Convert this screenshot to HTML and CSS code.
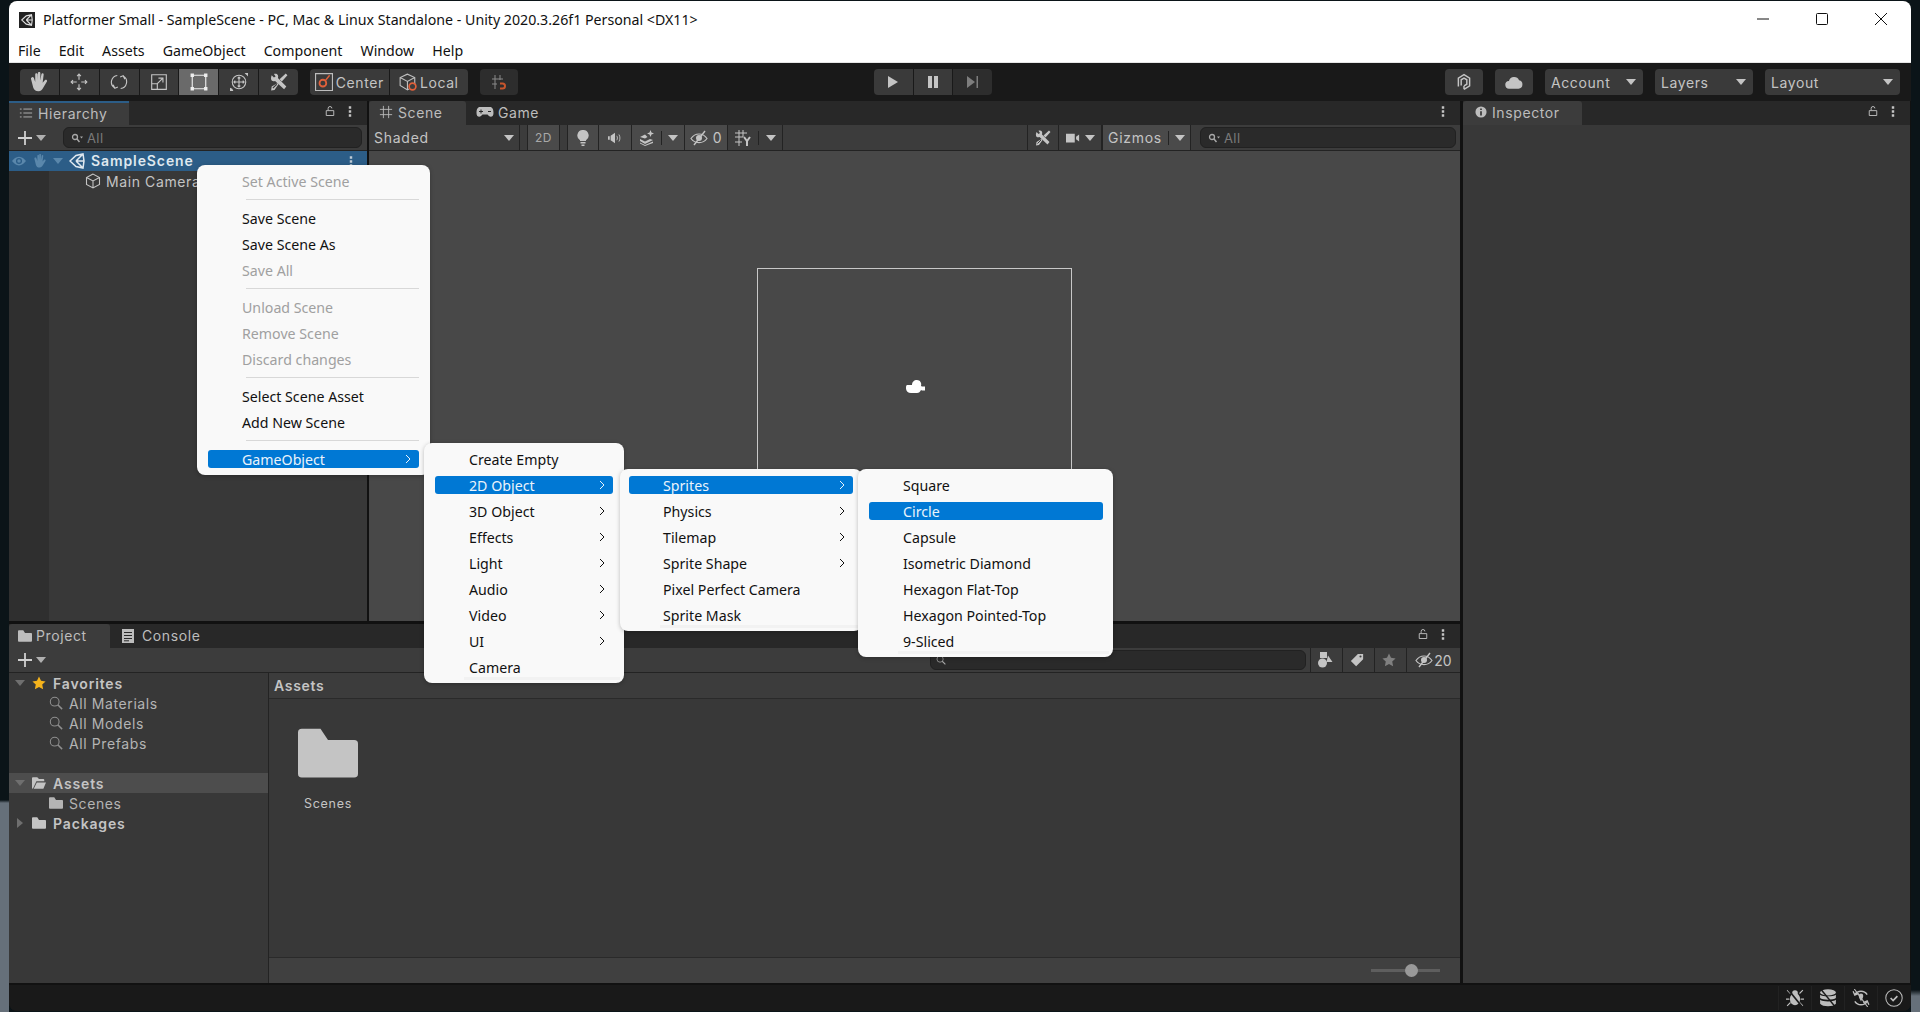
FILE: index.html
```html
<!DOCTYPE html>
<html>

<head>
    <title>Platformer Small - SampleScene</title>
    <meta charset="utf-8">
    <link rel="stylesheet" href="styles.css">
</head>

<body>
    <svg class="sprites" xmlns="http://www.w3.org/2000/svg">
        <symbol id="i-hand" viewBox="2 1 12.500 14"><path fill="currentColor" d="M3.4 4.600c.9-.3 1.200.3 1.400 1L5.600 8V2.800c0-1.300 1.600-1.300 1.700 0V7l.2-5.200c.1-1.300 1.700-1.200 1.700 0L9.200 7l.7-4.300c.3-1.200 1.800-.9 1.600.3L10.800 8.500l1.500-1.700c.9-.9 2.100.1 1.400 1.100l-2.600 4.300c-.7 1.200-1.500 2.300-3.200 2.300-2.100 0-3.200-1-3.700-2.600L2.700 6c-.2-.7.1-1.200.7-1.400z" /></symbol>
        <symbol id="i-move" viewBox="0 0 16 16"><path fill="none" stroke="currentColor" d="M8 1v5M8 10v5M1 8h5M10 8h5M6.300 2.700 8 1l1.700 1.700M6.300 13.300 8 15l1.700-1.700M2.700 6.300 1 8l1.700 1.700M13.300 6.300 15 8l-1.700 1.700" /></symbol>
        <symbol id="i-rotate" viewBox="0 0 16 16"><path fill="none" stroke="currentColor" d="M6.500 2.200A6 6 0 0 0 4 13.200M9.500 13.800A6 6 0 0 0 12 2.800M2.800 10.500 4.300 13.500 7 12.500M13.200 5.500 11.700 2.500 9 3.500" /></symbol>
        <symbol id="i-scale" viewBox="0 0 16 16"><path fill="none" stroke="currentColor" d="M1.500 1.500h13v13h-13zM1.500 9.500h5v5M6.500 9.500 11 5M7.500 4.500H11.500V8.500" /></symbol>
        <symbol id="i-rect" viewBox="0 0 16 16"><path fill="none" stroke="currentColor" d="M3 2h10M3 14h10M2 3v10M14 3v10" /><path fill="currentColor" d="M.5.500h3v3h-3zM12.500.500h3v3h-3zM.5 12.500h3v3h-3zM12.500 12.500h3v3h-3z" /></symbol>
        <symbol id="i-transform" viewBox="0 0 16 16"><circle cx="8" cy="8" r="6" fill="none" stroke="currentColor" /><path fill="none" stroke="currentColor" d="M8 3.500v9M3.500 8h9M6.800 4.700 8 3.500l1.200 1.200M6.800 11.300 8 12.500l1.200-1.200M4.700 6.800 3.500 8l1.200 1.200M11.300 6.800 12.500 8l-1.200 1.200" /><path fill="currentColor" d="M13 0h3v3l-1-1-1-1zM0 16v-3l2 1 1 2z" /></symbol>
        <symbol id="i-tools" viewBox="0 0 16 16"><path fill="currentColor" d="M1.500 2 3.500 4 5 3 3.500.8C6 0 8 1.500 7 4.500L14.500 12 12.500 14.500 4.500 7C1.500 8 0 6 1.500 2z" /><path fill="currentColor" d="M14 .5 15.500 2 10.500 7.500 8.500 5.500zM6.500 9 7.500 10 4 15 1 15.500 1.500 12z" /><path stroke="#3a3a3a" d="M2.500 13.500 6 10" /></symbol>
        <symbol id="i-center" viewBox="0 0 16 16"><path fill="none" stroke="#bdbdbd" d="M.5.500h15v15H.5z" /><circle cx="7" cy="9" r="3" fill="none" stroke="#e0603a" stroke-width="1.600" /><path stroke="#e0603a" stroke-width="1.300" d="M9 7l4-5" /></symbol>
        <symbol id="i-local" viewBox="0 0 16 16"><path fill="none" stroke="#bdbdbd" d="M7.500 1 1 4v7l6.500 4 6.500-4V4zM1 4l6.500 3.500L14 4M7.500 7.500V15" /><circle cx="12" cy="12" r="3" fill="#3c3c3c" stroke="#e0603a" stroke-width="1.500" /></symbol>
        <symbol id="i-snap" viewBox="0 0 16 16"><path fill="none" stroke="#8a8a8a" d="M4 1v14M9 1v5M1 5h11M1 10h5" /><path fill="none" stroke="#c8552c" stroke-width="2" d="M9 9.500h2.500a2.500 2.500 0 0 1 0 5H9" /></symbol>
        <symbol id="i-collab" viewBox="0 0 16 16"><path fill="none" stroke="currentColor" stroke-width="1.300" d="M3 12V4.500L8 1.500l5 3v7l-5 3M5.500 11V6l2.500-1.500L10.500 6v4L8 11.500M8 11.500v3" /></symbol>
        <symbol id="i-cloud" viewBox="0 0 16 16"><path fill="currentColor" d="M4 14a3.500 3.500 0 0 1-.5-7A4.800 4.800 0 0 1 12.500 6.500 3.800 3.800 0 0 1 12 14z" /></symbol>
        <symbol id="i-list" viewBox="0 0 16 16"><path fill="none" stroke="currentColor" d="M5 3.500h10M5 8h10M5 12.500h10M1 3.500h2M1 8h2M1 12.500h2" /></symbol>
        <symbol id="i-lock" viewBox="0 0 16 16"><path fill="none" stroke="currentColor" stroke-width="1.200" d="M3 7.500h10v6.500H3zM5.500 7V4.500a2.500 2.500 0 0 1 5 0" /></symbol>
        <symbol id="i-kebab" viewBox="0 0 4 16"><path fill="currentColor" d="M.5 1.500h3v3h-3zM.5 6.500h3v3h-3zM.5 11.500h3v3h-3z" /></symbol>
        <symbol id="i-hash" viewBox="0 0 16 16"><path fill="none" stroke="currentColor" d="M5 1v14M11 1v14M1 5h14M1 11h14" /></symbol>
        <symbol id="i-pad" viewBox="0 0 18 12"><path fill="currentColor" d="M4 1h10c2.500 0 3.500 2.500 3.500 6 0 4-3 4.500-4.500 3l-1.500-1.500h-5L5 10c-1.500 1.500-4.500 1-4.500-3 0-3.500 1-6 3.500-6z" /><path stroke="#282828" d="M3 5.500h4M5 3.500v4M12 5.500h3" /></symbol>
        <symbol id="i-plus" viewBox="0 0 16 16"><path fill="none" stroke="currentColor" stroke-width="1.800" d="M8 1v14M1 8h14" /></symbol>
        <symbol id="i-caret" viewBox="0 0 10 6"><path fill="currentColor" d="M0 0h10L5 6z" /></symbol>
        <symbol id="i-caret-r" viewBox="0 0 6 10"><path fill="currentColor" d="M0 0v10l6-5z" /></symbol>
        <symbol id="i-find" viewBox="0 0 12 10"><circle cx="4" cy="4" r="2.500" fill="none" stroke="currentColor" stroke-width="1.300" /><path stroke="currentColor" stroke-width="1.500" d="M5.800 5.800 8.500 9" /><path fill="currentColor" d="M9 3.500h3L10.500 5.500z" /></symbol>
        <symbol id="i-eye" viewBox="0 0 16 12"><path fill="currentColor" d="M8 1c3.500 0 6 2.500 8 5-2 2.500-4.500 5-8 5S2 8.500 0 6c2-2.500 4.500-5 8-5zm0 1.500a3.500 3.500 0 1 0 0 7 3.500 3.500 0 0 0 0-7z" /><circle cx="8" cy="6" r="2" fill="currentColor" /></symbol>
        <symbol id="i-unity" viewBox="0 0 16 16"><path fill="none" stroke="currentColor" stroke-width="1.500" d="M1 8 7 2.500 14 1 15 8 14 15 7 13.500zM7 8H15M7 8 14 1M7 8 14 15" /></symbol>
        <symbol id="i-cube" viewBox="0 0 16 16"><path fill="none" stroke="currentColor" stroke-width="1.100" d="M8 1 1.500 4.500v7L8 15l6.500-3.500v-7zM1.500 4.500 8 8l6.500-3.500M8 8v7" /></symbol>
        <symbol id="i-bulb" viewBox="0 0 12 16"><path fill="currentColor" d="M6 0a5.500 5.500 0 0 1 3 10.200V11H3v-.800A5.500 5.500 0 0 1 6 0zM3.500 12h5v1.500h-5zM4.500 14.500h3V16h-3z" /></symbol>
        <symbol id="i-audio" viewBox="0 0 16 12"><path fill="currentColor" d="M0 4h2v4H0zM3 3.500 8 0v12L3 8.500z" /><path fill="none" stroke="currentColor" d="M10 3.500c1 1.500 1 3.500 0 5M12.500 2c1.500 2.500 1.500 5.500 0 8" /></symbol>
        <symbol id="i-fx" viewBox="0 0 16 16"><path fill="currentColor" d="m11.500 0 1 2.500 2.500 1-2.500 1-1 2.500-1-2.500-2.500-1 2.500-1z" /><path fill="currentColor" d="M6 4.500 8.500 7l-2.500 1.500L1 7zM1 9l5 2.500L11 9l3 1-8 4-5-3zM1 12.500l5 2.500 8-3.500v1.500l-8 3-5-2.500z" /></symbol>
        <symbol id="i-eyeoff" viewBox="0 0 18 14"><path fill="none" stroke="currentColor" stroke-width="1.200" d="M1 7.500c4-6 12-6 16 0-4 5.500-12 5.500-16 0z" /><circle cx="9" cy="7" r="3" fill="currentColor" /><path stroke="currentColor" stroke-width="1.400" d="M4 14 15 0" /></symbol>
        <symbol id="i-gridy" viewBox="0 0 16 16"><path fill="none" stroke="currentColor" d="M4 0v16M8 0v7M0 3h12M0 7h8M0 12h7" /><path fill="none" stroke="currentColor" stroke-width="2" d="M9 7l3 4 3-4M12 11v5" /></symbol>
        <symbol id="i-camera" viewBox="0 0 16 12"><path fill="currentColor" d="M0 1h10v10H0zM11.500 4.500 15 2v8l-3.500-2.500z" /></symbol>
        <symbol id="i-folder" viewBox="0 0 16 13"><path fill="currentColor" d="M1 0h5l2 3h7a1 1 0 0 1 1 1v8a1 1 0 0 1-1 1H1a1 1 0 0 1-1-1V1a1 1 0 0 1 1-1z" /></symbol>
        <symbol id="i-open" viewBox="0 0 16 13"><path fill="currentColor" d="M1 0h5l2 2h5a1 1 0 0 1 1 1v1.500H5L1 13h-.5L0 12V1a1 1 0 0 1 1-1zM5.500 6H16l-3 7H2z" /></symbol>
        <symbol id="i-star" viewBox="0 0 16 16"><path fill="currentColor" d="m8 .5 2.300 5 5.200.7-3.800 3.600 1 5.400L8 12.500l-4.700 2.700 1-5.400L.5 6.200l5.200-.7z" /></symbol>
        <symbol id="i-mag" viewBox="0 0 16 16"><circle cx="6.500" cy="6.500" r="5" fill="none" stroke="currentColor" stroke-width="1.200" /><path stroke="currentColor" stroke-width="1.700" d="m10 10 5 5" /></symbol>
        <symbol id="i-doc" viewBox="0 0 12 14"><path fill="currentColor" d="M0 0h12v14H0z" /><path stroke="#282828" d="M2 3.500h8M2 6.500h8M2 9.500h8M2 11.800h5" /></symbol>
        <symbol id="i-shapes" viewBox="0 0 16 16"><path fill="currentColor" d="M3 0h7v6H3zM11 3.500l4.500 6.500H9.500z" /><circle cx="5.500" cy="11" r="4.500" fill="currentColor" /></symbol>
        <symbol id="i-tag" viewBox="0 0 16 16"><path fill="currentColor" fill-rule="evenodd" d="M9 1h6v6l-8 8-6-6zm3 1.800a1.200 1.200 0 1 0 0 2.400 1.200 1.200 0 0 0 0-2.400z" /></symbol>
        <symbol id="i-bug" viewBox="0 0 16 16"><ellipse cx="8" cy="9" rx="4.500" ry="5.500" fill="currentColor" /><circle cx="8" cy="3.500" r="2.500" fill="currentColor" /><path stroke="currentColor" d="M1 1l3 3M15 1l-3 3M0 9h3M13 9h3M1 15l3-3M15 15l-3-3" /><path stroke="#191919" stroke-width="1.500" d="M1.500 0 14.500 16" /></symbol>
        <symbol id="i-db" viewBox="0 0 16 16"><ellipse cx="8" cy="3" rx="7" ry="2.800" fill="currentColor" /><path fill="currentColor" d="M1 5c2 2 12 2 14 0v3c-2 2-12 2-14 0zM1 9.500c2 2 12 2 14 0V13c-2 3-12 3-14 0z" /><path stroke="#191919" stroke-width="1.300" d="M1.500 0 14.500 16" /></symbol>
        <symbol id="i-sync" viewBox="0 0 16 16"><path fill="none" stroke="currentColor" stroke-width="1.200" d="M2.500 5A6.500 6.500 0 0 1 13.500 5M13.500 11A6.500 6.500 0 0 1 2.500 11M1 2l1.500 3.500L6 4M15 14l-1.500-3.500L10 12" /><path fill="currentColor" d="M8 4a2 2 0 0 1 2 2c0 2-1 3-2 5-1-2-2-3-2-5a2 2 0 0 1 2-2z" /><path stroke="currentColor" d="M2 0l12 16" /></symbol>
        <symbol id="i-check" viewBox="0 0 16 16"><circle cx="8" cy="8" r="7.300" fill="none" stroke="currentColor" stroke-width=".9" /><path fill="none" stroke="currentColor" stroke-width="1.500" d="m5 8 2.200 2.200L11 6.300" /></symbol>
        <symbol id="i-info" viewBox="0 0 14 14"><circle cx="7" cy="7" r="6.500" fill="currentColor" /><path stroke="#383838" stroke-width="2" d="M7 3v1.800M7 6v5" /></symbol>
        <symbol id="i-chev" viewBox="0 0 6 10"><path fill="none" stroke="currentColor" d="m1 1 4 4-4 4" /></symbol>
    </svg>

    <div id="window">
        <div id="titlebar">
            <span class="app-icon"><svg class="ic-12"><use href="#i-unity" /></svg></span>
            <span class="app-title">Platformer Small - SampleScene - PC, Mac &amp; Linux Standalone - Unity 2020.3.26f1 Personal &lt;DX11&gt;</span>
            <div class="win-btns">
                <svg class="win-btn" viewBox="0 0 12 12"><path stroke="#111" d="M0 6h12" /></svg>
                <svg class="win-btn" viewBox="0 0 12 12"><rect x=".5" y=".5" width="11" height="11" rx="1" fill="none" stroke="#111" /></svg>
                <svg class="win-btn" viewBox="0 0 12 12"><path stroke="#111" d="m0 0 12 12M12 0 0 12" /></svg>
            </div>
        </div>
        <div id="menubar">
            <span>File</span><span>Edit</span><span>Assets</span><span>GameObject</span><span>Component</span><span>Window</span><span>Help</span>
        </div>

        <div id="toolbar">
            <div class="tb-group tools">
                <div class="tb-btn"><svg class="ic-20"><use href="#i-hand" /></svg></div>
                <div class="tb-btn"><svg class="ic-18"><use href="#i-move" /></svg></div>
                <div class="tb-btn"><svg class="ic-18"><use href="#i-rotate" /></svg></div>
                <div class="tb-btn"><svg class="ic-18"><use href="#i-scale" /></svg></div>
                <div class="tb-btn on"><svg class="ic-18"><use href="#i-rect" /></svg></div>
                <div class="tb-btn"><svg class="ic-18"><use href="#i-transform" /></svg></div>
                <div class="tb-btn"><svg class="ic-18"><use href="#i-tools" /></svg></div>
            </div>
            <div class="tb-group pivots">
                <div class="tb-btn"><svg class="ic-18"><use href="#i-center" /></svg>Center</div>
                <div class="tb-btn"><svg class="ic-18"><use href="#i-local" /></svg>Local</div>
            </div>
            <div class="tb-group snap">
                <div class="tb-btn"><svg class="ic-16"><use href="#i-snap" /></svg></div>
            </div>
            <div class="tb-group play">
                <div class="tb-btn"><svg class="ic-12" viewBox="0 0 12 12"><path fill="#c4c4c4" d="M1 0v12l10-6z" /></svg></div>
                <div class="tb-btn"><svg class="ic-12" viewBox="0 0 12 12"><path fill="#c4c4c4" d="M1 0h4v12H1zM7 0h4v12H7z" /></svg></div>
                <div class="tb-btn off"><svg class="ic-12" viewBox="0 0 12 12"><path fill="#7d7d7d" d="M0 0v12l8-6zM9.500 0H11v12H9.500z" /></svg></div>
            </div>
            <div class="tb-right">
                <div class="tb-btn single"><svg class="ic-18"><use href="#i-collab" /></svg></div>
                <div class="tb-btn single"><svg class="ic-18"><use href="#i-cloud" /></svg></div>
                <div class="tb-btn drop account">Account<svg class="caret"><use href="#i-caret" /></svg></div>
                <div class="tb-btn drop layers">Layers<svg class="caret"><use href="#i-caret" /></svg></div>
                <div class="tb-btn drop layout">Layout<svg class="caret"><use href="#i-caret" /></svg></div>
            </div>
        </div>

        <div id="main">
            <div class="col-left">
                <div class="row-top">
                    <div class="panel hierarchy">
                        <div class="tabs">
                            <div class="tab on blue"><svg class="ic-14"><use href="#i-list" /></svg>Hierarchy</div>
                            <div class="tab-actions">
                                <svg class="ic-12"><use href="#i-lock" /></svg>
                                <svg class="kebab"><use href="#i-kebab" /></svg>
                            </div>
                        </div>
                        <div class="bar">
                            <div class="add"><svg class="ic-16"><use href="#i-plus" /></svg><svg class="caret"><use href="#i-caret" /></svg></div>
                            <div class="search grow"><svg class="find"><use href="#i-find" /></svg>All</div>
                        </div>
                        <div class="tree">
                            <div class="scene-row">
                                <svg class="ic-14 dim"><use href="#i-eye" /></svg>
                                <svg class="ic-14 dim"><use href="#i-hand" /></svg>
                                <svg class="caret dim"><use href="#i-caret" /></svg>
                                <svg class="ic-16"><use href="#i-unity" /></svg>
                                <b>SampleScene</b>
                                <svg class="kebab end"><use href="#i-kebab" /></svg>
                            </div>
                            <div class="obj-row"><svg class="ic-16"><use href="#i-cube" /></svg>Main Camera</div>
                        </div>
                    </div>

                    <div class="panel scene">
                        <div class="tabs">
                            <div class="tab on"><svg class="ic-14"><use href="#i-hash" /></svg>Scene</div>
                            <div class="tab game-tab"><svg class="pad"><use href="#i-pad" /></svg>Game</div>
                            <div class="tab-actions">
                                <svg class="kebab"><use href="#i-kebab" /></svg>
                            </div>
                        </div>
                        <div class="bar scene-bar">
                            <div class="sb shaded">Shaded<svg class="caret"><use href="#i-caret" /></svg></div>
                            <div class="sb lit w2d">2D</div>
                            <div class="sb lit w-light"><svg class="ic-16"><use href="#i-bulb" /></svg></div>
                            <div class="sb lit w-audio"><svg class="ic-14"><use href="#i-audio" /></svg></div>
                            <div class="sb lit w-fx"><svg class="ic-16"><use href="#i-fx" /></svg><i class="tick"></i><svg class="caret"><use href="#i-caret" /></svg></div>
                            <div class="sb lit w-eye"><svg class="ic-18"><use href="#i-eyeoff" /></svg>0</div>
                            <div class="sb w-grid"><svg class="ic-16"><use href="#i-gridy" /></svg><i class="tick"></i><svg class="caret"><use href="#i-caret" /></svg></div>
                            <div class="grow"></div>
                            <div class="sb w-tools"><svg class="ic-16"><use href="#i-tools" /></svg></div>
                            <div class="sb w-cam"><svg class="ic-14"><use href="#i-camera" /></svg><svg class="caret"><use href="#i-caret" /></svg></div>
                            <div class="sb lit w-giz">Gizmos<i class="tick"></i><svg class="caret"><use href="#i-caret" /></svg></div>
                            <div class="search scene-search"><svg class="find"><use href="#i-find" /></svg>All</div>
                        </div>
                        <div class="viewport">
                            <div class="cam-frame"></div>
                            <svg class="cam-gizmo" viewBox="0 0 19 15"><path fill="#fff" d="M1 6h5c0-3 2-5 5-5s5 3 4 6l1 .5h3v4h-3l-1-.5c-1 2-2 3-4 3H5c-3 0-5-2-5-4.500S0 7 1 6z" /></svg>
                        </div>
                    </div>
                </div>

                <div class="panel project">
                    <div class="tabs">
                        <div class="tab on proj-tab"><svg class="ic-14"><use href="#i-folder" /></svg>Project</div>
                        <div class="tab console-tab"><svg class="ic-14"><use href="#i-doc" /></svg>Console</div>
                        <div class="tab-actions">
                            <svg class="ic-12"><use href="#i-lock" /></svg>
                            <svg class="kebab"><use href="#i-kebab" /></svg>
                        </div>
                    </div>
                    <div class="bar project-bar">
                        <div class="add"><svg class="ic-16"><use href="#i-plus" /></svg><svg class="caret"><use href="#i-caret" /></svg></div>
                        <div class="grow"></div>
                        <div class="search proj-search"><svg class="find small"><use href="#i-mag" /></svg></div>
                        <div class="sb w-filter"><svg class="ic-16"><use href="#i-shapes" /></svg></div>
                        <div class="sb w-filter"><svg class="ic-14"><use href="#i-tag" /></svg></div>
                        <div class="sb w-filter muted"><svg class="ic-14"><use href="#i-star" /></svg></div>
                        <div class="sb w-hidden"><svg class="ic-18"><use href="#i-eyeoff" /></svg>20</div>
                    </div>
                    <div class="browser">
                        <div class="folders">
                            <div class="f-row top"><svg class="tri"><use href="#i-caret" /></svg><svg class="ic-14 gold"><use href="#i-star" /></svg><b>Favorites</b></div>
                            <div class="f-row sub"><svg class="ic-14 mid"><use href="#i-mag" /></svg>All Materials</div>
                            <div class="f-row sub"><svg class="ic-14 mid"><use href="#i-mag" /></svg>All Models</div>
                            <div class="f-row sub"><svg class="ic-14 mid"><use href="#i-mag" /></svg>All Prefabs</div>
                            <div class="f-gap"></div>
                            <div class="f-row top sel"><svg class="tri"><use href="#i-caret" /></svg><svg class="ic-14"><use href="#i-open" /></svg><b>Assets</b></div>
                            <div class="f-row sub"><svg class="ic-14"><use href="#i-folder" /></svg>Scenes</div>
                            <div class="f-row top"><svg class="tri side"><use href="#i-caret-r" /></svg><svg class="ic-14"><use href="#i-folder" /></svg><b>Packages</b></div>
                        </div>
                        <div class="assets">
                            <div class="crumb">Assets</div>
                            <div class="asset-grid">
                                <div class="asset"><svg class="big-folder"><use href="#i-folder" /></svg><span>Scenes</span></div>
                            </div>
                            <div class="assets-foot">
                                <div class="slider"><i class="thumb"></i></div>
                            </div>
                        </div>
                    </div>
                </div>
            </div>

            <div class="panel inspector">
                <div class="tabs">
                    <div class="tab on insp-tab"><svg class="ic-12"><use href="#i-info" /></svg>Inspector</div>
                    <div class="tab-actions">
                        <svg class="ic-12"><use href="#i-lock" /></svg>
                        <svg class="kebab"><use href="#i-kebab" /></svg>
                    </div>
                </div>
            </div>
        </div>

        <div id="statusbar">
            <div class="st"><svg class="ic-18"><use href="#i-bug" /></svg></div>
            <div class="st"><svg class="ic-18"><use href="#i-db" /></svg></div>
            <div class="st"><svg class="ic-18"><use href="#i-sync" /></svg></div>
            <div class="st"><svg class="ic-18"><use href="#i-check" /></svg></div>
        </div>
    </div>

    <!-- context menus -->
    <div class="menu m1">
        <div class="item off">Set Active Scene</div>
        <div class="sep"></div>
        <div class="item">Save Scene</div>
        <div class="item">Save Scene As</div>
        <div class="item off">Save All</div>
        <div class="sep"></div>
        <div class="item off">Unload Scene</div>
        <div class="item off">Remove Scene</div>
        <div class="item off">Discard changes</div>
        <div class="sep"></div>
        <div class="item">Select Scene Asset</div>
        <div class="item">Add New Scene</div>
        <div class="sep"></div>
        <div class="item hot">GameObject<svg class="chev"><use href="#i-chev" /></svg></div>
    </div>
    <div class="menu m2 band">
        <div class="item">Create Empty</div>
        <div class="item hot">2D Object<svg class="chev"><use href="#i-chev" /></svg></div>
        <div class="item">3D Object<svg class="chev"><use href="#i-chev" /></svg></div>
        <div class="item">Effects<svg class="chev"><use href="#i-chev" /></svg></div>
        <div class="item">Light<svg class="chev"><use href="#i-chev" /></svg></div>
        <div class="item">Audio<svg class="chev"><use href="#i-chev" /></svg></div>
        <div class="item">Video<svg class="chev"><use href="#i-chev" /></svg></div>
        <div class="item">UI<svg class="chev"><use href="#i-chev" /></svg></div>
        <div class="item">Camera</div>
    </div>
    <div class="menu m3 band">
        <div class="item hot">Sprites<svg class="chev"><use href="#i-chev" /></svg></div>
        <div class="item">Physics<svg class="chev"><use href="#i-chev" /></svg></div>
        <div class="item">Tilemap<svg class="chev"><use href="#i-chev" /></svg></div>
        <div class="item">Sprite Shape<svg class="chev"><use href="#i-chev" /></svg></div>
        <div class="item">Pixel Perfect Camera</div>
        <div class="item">Sprite Mask</div>
    </div>
    <div class="menu m4 band">
        <div class="item">Square</div>
        <div class="item hot">Circle</div>
        <div class="item">Capsule</div>
        <div class="item">Isometric Diamond</div>
        <div class="item">Hexagon Flat-Top</div>
        <div class="item">Hexagon Pointed-Top</div>
        <div class="item">9-Sliced</div>
    </div>
</body>

</html>
```

FILE: styles.css
```css
* {
    box-sizing: border-box;
}

html,
body {
    height: 100%;
}

body {
    margin: 0;
    overflow: hidden;
    padding: 1px 0 0 9px;
    position: relative;
    font-family: Inter, "Noto Sans", sans-serif;
    font-size: 14px;
    color: #c4c4c4;
    background:
        linear-gradient(#0b1418 800px, #66707a 803px) left top / 9px 100% no-repeat,
        linear-gradient(#0b1418 990px, #66707a 996px) right top / 9px 100% no-repeat,
        #0b1418;
}

svg {
    flex: none;
    display: block;
}

.sprites {
    display: none;
}

.ic-12 { width: 12px; height: 12px; }
.ic-14 { width: 14px; height: 14px; }
.ic-16 { width: 16px; height: 16px; }
.ic-18 { width: 18px; height: 18px; }
.ic-20 { width: 20px; height: 20px; }

.caret {
    width: 10px;
    height: 6px;
}

.kebab {
    width: 4px;
    height: 13px;
}

.pad {
    width: 18px;
    height: 12px;
}

.grow {
    flex: 1;
}

#window {
    width: 1902px;
    height: 1010px;
    display: flex;
    flex-direction: column;
    border-radius: 8px;
    overflow: hidden;
    background: #191919;
}

/* windows chrome */
#titlebar {
    height: 37px;
    flex: none;
    display: flex;
    align-items: center;
    padding-left: 10px;
    background: white;
    color: #111;
    font-family: "Noto Sans", sans-serif;
    font-size: 14.200px;
}

.app-icon {
    width: 16px;
    height: 16px;
    margin-right: 8px;
    display: flex;
    align-items: center;
    justify-content: center;
    background: #222;
    color: #ddd;
}

.win-btns {
    margin-left: auto;
    display: flex;
    gap: 47px;
    padding: 0 24px 2px 0;
}

.win-btn {
    width: 12px;
    height: 12px;
}

#menubar {
    height: 24px;
    flex: none;
    display: flex;
    gap: 18px;
    align-items: center;
    padding-left: 9px;
    background: white;
    color: #111;
    font-family: "Noto Sans", sans-serif;
    font-size: 14.200px;
}

/* main toolbar */
#toolbar {
    height: 39px;
    flex: none;
    display: flex;
    align-items: center;
    padding: 0 11px;
    background: #191919;
    border-top: 1px solid #e6e6e6;
}

.tb-group {
    display: flex;
    gap: 1px;
    height: 26px;
}

.tb-group .tb-btn:first-child {
    border-radius: 4px 0 0 4px;
}

.tb-group .tb-btn:last-child {
    border-radius: 0 4px 4px 0;
}

.tb-btn {
    flex: 1;
    display: flex;
    align-items: center;
    justify-content: center;
    height: 26px;
    background: #3a3a3a;
    color: #c4c4c4;
    letter-spacing: .6px;
}

.tb-btn.on {
    background: #6a6a6a;
    color: #eee;
}

.tb-btn.off {
    background: #2d2d2d;
}

.tools {
    width: 278px;
}

.pivots {
    width: 158px;
    margin-left: 12px;
}

.pivots .tb-btn {
    gap: 3px;
}

.snap {
    width: 38px;
    margin-left: 12px;
}

.snap .tb-btn {
    border-radius: 4px !important;
    background: #2d2d2d;
}

.play {
    width: 118px;
    margin-left: 356px;
}

.tb-right {
    margin-left: auto;
    display: flex;
    gap: 12px;
}

.tb-btn.single {
    flex: none;
    width: 38px;
    border-radius: 4px;
}

.tb-btn.drop {
    flex: none;
    justify-content: space-between;
    padding: 0 7px 0 6px;
    border-radius: 4px;
}

.account { width: 98px; }
.layers { width: 98px; }
.layout { width: 135px; }

/* docked panels */
#main {
    flex: 1;
    display: flex;
    gap: 3px;
    min-height: 0;
    background: #111;
    padding: 0 1px 2px 0;
}

.col-left {
    width: 1451px;
    flex: none;
    display: flex;
    flex-direction: column;
    gap: 3px;
}

.row-top {
    height: 520px;
    flex: none;
    display: flex;
    gap: 2px;
}

.panel {
    display: flex;
    flex-direction: column;
    background: #383838;
    min-width: 0;
}

.hierarchy {
    width: 358px;
    flex: none;
}

.scene {
    flex: 1;
}

.project {
    flex: 1;
    min-height: 0;
}

.inspector {
    flex: 1;
}

.tabs {
    height: 24px;
    flex: none;
    display: flex;
    background: #282828;
}

.tab {
    display: flex;
    align-items: center;
    gap: 5px;
    padding: 0 10px 2px;
    letter-spacing: .6px;
    color: #bdbdbd;
}

.tab.on {
    background: #3c3c3c;
    border-radius: 3px 3px 0 0;
}

.tab.blue {
    border-top: 2px solid #2c5d87;
    border-radius: 0;
    padding-bottom: 2px;
}

.hierarchy .tab {
    width: 120px;
}

.scene .tab.on {
    width: 97px;
}

.game-tab {
    gap: 4px;
}

.proj-tab {
    width: 101px;
    padding: 0 10px 1px 9px;
    gap: 4px;
}

.console-tab {
    padding: 0 10px 1px 11px;
    gap: 7px;
}

.insp-tab {
    width: 119px;
    padding-left: 12px;
}

.tab-actions {
    margin-left: auto;
    display: flex;
    align-items: center;
    gap: 12px;
    padding: 0 15px 4px 0;
}

.bar {
    height: 26px;
    flex: none;
    display: flex;
    align-items: center;
    background: #3c3c3c;
    border-bottom: 1px solid #232323;
}

.add {
    display: flex;
    align-items: center;
    gap: 3px;
    padding-left: 8px;
    width: 54px;
    color: #d0d0d0;
}

.add .caret {
    color: #b0b0b0;
}

.search {
    height: 21px;
    display: flex;
    align-items: center;
    gap: 4px;
    padding-left: 7px;
    border-radius: 6px;
    background: #2a2a2a;
    border: 1px solid #212121;
    color: #7a7a7a;
    font-size: 13px;
    letter-spacing: .4px;
}

.hierarchy .search {
    margin-right: 5px;
}

.find {
    width: 12px;
    height: 10px;
    color: #a8a8a8;
}

.find.small {
    width: 10px;
    height: 10px;
}

.tree {
    flex: 1;
    background: linear-gradient(90deg, #2f2f2f 40px, #383838 40px);
}

.scene-row {
    height: 20px;
    display: flex;
    align-items: center;
    padding-left: 3px;
    background: #2c5d87;
    color: #dfe8ef;
}

.scene-row b {
    margin: 0 0 1px 6px;
    letter-spacing: .9px;
    font-weight: 600;
}

.scene-row .dim {
    color: #5a87ab;
    margin-right: 7px;
}

.scene-row .caret.dim {
    margin: 0 6px 0 -1px;
}

.scene-row .end {
    margin-left: auto;
    margin-right: 14px;
    color: #c0ccd6;
}

.obj-row {
    height: 20px;
    display: flex;
    align-items: center;
    gap: 5px;
    padding-left: 76px;
    letter-spacing: .6px;
    color: #c4c4c4;
}

.sb {
    height: 25px;
    display: flex;
    align-items: center;
    justify-content: center;
    gap: 5px;
    border-right: 1px solid #232323;
    color: #c4c4c4;
    letter-spacing: .5px;
}

.sb.lit {
    background: #4a4a4a;
    border-left: 1px solid #232323;
    margin-left: -1px;
}

.sb.shaded {
    width: 151px;
    justify-content: space-between;
    padding: 0 5px;
    letter-spacing: .75px;
    background: #3c3c3c;
}

.sb.w2d {
    width: 33px;
    margin-left: 7px;
    font-size: 12px;
    color: #a8a8a8;
}

.sb.w-light {
    width: 32px;
    margin-left: 7px;
}

.w-audio { width: 34px; }
.w-fx { width: 54px; gap: 6px; }
.w-eye { width: 44px; }
.w-grid { width: 55px; gap: 7px; }

.tick {
    width: 1px;
    height: 14px;
    background: #232323;
}

.w-tools { width: 32px; border-left: 1px solid #232323; }
.w-cam { width: 43px; }

.sb.w-giz {
    width: 89px;
    margin-left: 0;
    gap: 6px;
    letter-spacing: .7px;
}

.scene-search {
    width: 256px;
    margin-left: 9px;
    margin-right: 4px;
}

.viewport {
    flex: 1;
    position: relative;
    background: #484848;
}

/* camera bounds in the scene view */
.cam-frame {
    position: absolute;
    left: 388px;
    top: 117px;
    width: 315px;
    height: 300px;
    border: 1px solid #c8c8c8;
}

.cam-gizmo {
    position: absolute;
    left: 537px;
    top: 228px;
    width: 19px;
    height: 15px;
}

.project-bar {
    height: 25px;
}

.proj-search {
    width: 376px;
    height: 20px;
    margin-right: 4px;
    padding-left: 5px;
}

.w-filter {
    width: 32px;
    padding-right: 3px;
    border-left: 1px solid #232323;
    border-right: 0;
}

.w-filter.muted {
    color: #808080;
}

.w-hidden {
    width: 54px;
    border-left: 1px solid #232323;
    border-right: 0;
    gap: 1px;
    letter-spacing: 0;
}

.browser {
    flex: 1;
    display: flex;
    min-height: 0;
}

.folders {
    width: 260px;
    flex: none;
    border-right: 1px solid #232323;
}

.f-row {
    height: 20px;
    display: flex;
    align-items: center;
    letter-spacing: .6px;
}

.f-row b {
    font-weight: 600;
    letter-spacing: .85px;
}

.f-row.top {
    padding-left: 6px;
}

.f-row.top svg + svg {
    margin: 0 7px 0 7px;
}

.f-row.sub {
    padding-left: 40px;
    gap: 6px;
    color: #b4b4b4;
}

.f-row.sel {
    background: #4d4d4d;
}

.f-gap {
    height: 20px;
}

.tri {
    width: 10px;
    height: 6px;
    color: #6f6f6f;
}

.tri.side {
    width: 6px;
    height: 10px;
    margin: 0 2px;
}

.gold {
    color: #f5b31c;
}

.mid {
    color: #8f8f8f;
}

.assets {
    flex: 1;
    display: flex;
    flex-direction: column;
}

.crumb {
    height: 26px;
    flex: none;
    display: flex;
    align-items: center;
    padding-left: 5px;
    background: #3c3c3c;
    border-bottom: 1px solid #2a2a2a;
    font-weight: 600;
    letter-spacing: .7px;
}

.asset-grid {
    flex: 1;
    padding: 29px 0 0 20px;
}

.asset {
    width: 78px;
    display: flex;
    flex-direction: column;
    align-items: center;
    font-size: 12.500px;
    letter-spacing: .7px;
}

.big-folder {
    width: 60px;
    height: 50px;
    margin-bottom: 18px;
    color: #c4c4c4;
}

.assets-foot {
    height: 26px;
    flex: none;
    display: flex;
    align-items: center;
    justify-content: flex-end;
    padding-right: 20px;
    background: #404040;
    border-top: 1px solid #2a2a2a;
}

.slider {
    width: 69px;
    height: 3px;
    position: relative;
    background: #5e5e5e;
}

.thumb {
    position: absolute;
    left: 34px;
    top: -5px;
    width: 13px;
    height: 13px;
    border-radius: 50%;
    background: #999;
}

#statusbar {
    height: 26px;
    flex: none;
    display: flex;
    justify-content: flex-end;
    align-items: center;
    padding-right: 1px;
    background: #191919;
    color: #bdbdbd;
}

.st {
    width: 33px;
    height: 24px;
    display: flex;
    align-items: center;
    justify-content: center;
    border-left: 1px solid #222;
}

/* popup menus */
.menu {
    position: absolute;
    display: flex;
    flex-direction: column;
    padding: 3px 0;
    background: #f9f9f9;
    border-radius: 8px;
    box-shadow: 0 1px 4px rgba(0, 0, 0, .25);
    color: #111;
    font-family: "Noto Sans", sans-serif;
    font-size: 14.200px;
}

.m1 { left: 197px; top: 165px; width: 233px; z-index: 1; }
.m2 { left: 424px; top: 443px; width: 200px; z-index: 2; }
.m3 { left: 620px; top: 469px; width: 242px; z-index: 3; }
.m4 { left: 858px; top: 469px; width: 255px; z-index: 4; }

.band::after {
    content: "";
    position: absolute;
    left: 40px;
    right: 4px;
    bottom: 3px;
    height: 3px;
    background: #f2f2f2;
}

.item {
    height: 18px;
    margin: 4px 11px;
    padding: 0 8px 0 34px;
    display: flex;
    justify-content: space-between;
    line-height: 20px;
    border-radius: 3px;
    white-space: nowrap;
}

.m3 .item {
    margin-left: 9px;
    margin-right: 9px;
}

.m4 .item {
    margin-right: 10px;
}

.item.off {
    color: #a0a0a0;
}

.item.hot {
    background: #0078d4;
    color: #eaf3fb;
}

.chev {
    width: 6px;
    height: 10px;
    margin-top: 4px;
}

.sep {
    height: 1px;
    margin: 5px 11px 5px 49px;
    background: #d8d8d8;
}
```
